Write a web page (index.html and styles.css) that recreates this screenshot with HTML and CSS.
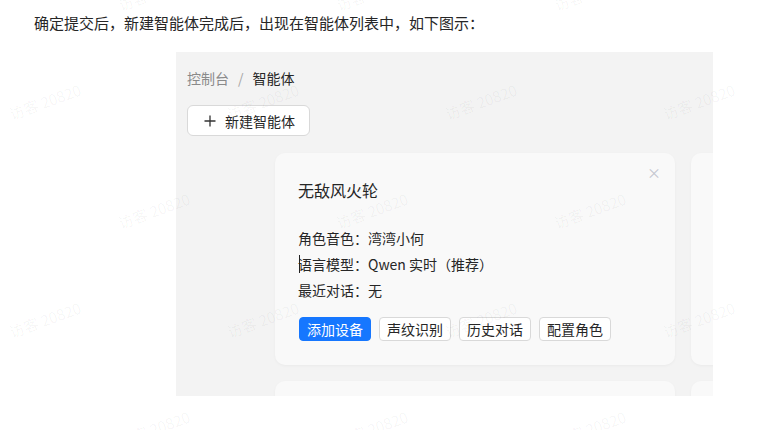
FILE: index.html
```html
<!DOCTYPE html>
<html lang="zh-CN">
<head>
<meta charset="utf-8">
<link rel="stylesheet" href="styles.css">
</head>
<body>
<p class="intro">确定提交后，新建智能体完成后，出现在智能体列表中，如下图示：</p>
<div class="shot">
  <div class="crumbs"><span class="crumb-muted">控制台</span><span class="crumb-sep">/</span><span class="crumb-cur">智能体</span></div>
  <button class="new-btn"><svg class="plus" width="12" height="12" viewBox="0 0 12 12"><path d="M6 0.5V11.5M0.5 6H11.5" stroke="#333" stroke-width="1.3" fill="none"/></svg><span>新建智能体</span></button>
  <div class="cards">
    <div class="card">
      <span class="close">×</span>
      <div class="card-title">无敌风火轮</div>
      <div class="info">
        <div class="line">角色音色：湾湾小何</div>
        <div class="line"><span class="caret"></span>语言模型：Qwen 实时（推荐）</div>
        <div class="line">最近对话：无</div>
      </div>
      <div class="actions">
        <button class="act primary">添加设备</button>
        <button class="act">声纹识别</button>
        <button class="act">历史对话</button>
        <button class="act">配置角色</button>
      </div>
    </div>
    <div class="card"></div>
    <div class="card"></div>
    <div class="card"></div>
  </div>
</div>
<div class="wm">
  <div class="wm-row odd"><span>访客 20820</span><span>访客 20820</span><span>访客 20820</span><span>访客 20820</span></div>
  <div class="wm-row even"><span>访客 20820</span><span>访客 20820</span><span>访客 20820</span><span>访客 20820</span></div>
  <div class="wm-row odd"><span>访客 20820</span><span>访客 20820</span><span>访客 20820</span><span>访客 20820</span></div>
  <div class="wm-row even"><span>访客 20820</span><span>访客 20820</span><span>访客 20820</span><span>访客 20820</span></div>
  <div class="wm-row odd"><span>访客 20820</span><span>访客 20820</span><span>访客 20820</span><span>访客 20820</span></div>
</div>
</body>
</html>
```
FILE: styles.css
```css
* { box-sizing: border-box; }
html, body { margin: 0; padding: 0; background: #fff; }
body {
  width: 771px; height: 430px; overflow: hidden; position: relative;
  font-family: "Noto Sans CJK SC", "Noto Sans", sans-serif;
  color: #262626;
}
.intro {
  margin: 0; padding: 12px 0 0 34px;
  font-size: 15px; line-height: 22px; height: 52px;
  color: #262626;
}
.shot {
  margin-left: 176px; width: 537px; height: 344px;
  background: #f3f3f3; overflow: hidden;
  padding: 16px 0 0 11px;
}
.crumbs { font-size: 14px; line-height: 20px; display: flex; align-items: center; }
.crumb-muted { color: #8a8a8a; }
.crumb-sep { color: #a6a6a6; margin: 0 9px; }
.crumb-cur { color: #262626; }
.new-btn {
  margin-top: 17px; height: 31px; width: 123px;
  background: #fff; border: 1px solid #d9d9d9; border-radius: 6px;
  display: flex; align-items: center; padding: 0 0 0 16px; gap: 9px;
  font-family: inherit; font-size: 14px; color: #262626;
}
.plus { display: block; }
.cards {
  margin: 17px 0 0 88px;
  display: grid; grid-template-columns: 400px 400px; gap: 16px;
}
.card {
  position: relative; background: #f9f9f9; border-radius: 10px;
  height: 212px; padding: 25px 24px 0 23px;
  box-shadow: 0 1px 3px rgba(0,0,0,0.04);
}
.close {
  position: absolute; top: 12px; right: 14px;
  font-size: 14px; line-height: 14px; color: #c3c6cf;
}
.card-title { font-size: 16px; line-height: 24px; color: #262626; }
.info { margin-top: 23px; }
.line { font-size: 14px; line-height: 26px; color: #262626; position: relative; }
.caret {
  position: absolute; left: 1px; top: 4px; width: 1px; height: 18px; background: #222;
}
.actions { margin-top: 14px; display: flex; gap: 8px; padding-left: 1px; }
.act {
  height: 24px; padding: 0 7px; font-family: inherit; font-size: 14px;
  line-height: 22px; border: 1px solid #d9d9d9; border-radius: 4px;
  background: #fff; color: #262626;
}
.act.primary { background: #1677ff; border-color: #1677ff; color: #fff; }
.wm {
  position: absolute; left: 0; top: -62px; width: 771px; height: 492px;
  overflow: hidden; pointer-events: none;
}
.wm-row { height: 109px; display: flex; align-items: center; }
.wm-row.even { margin-left: -64px; }
.wm-row.odd { margin-left: 45px; }
.wm-row span {
  flex: 0 0 218px; text-align: center;
  font-size: 15px; line-height: 20px; color: rgba(0,0,0,0.045);
  transform: rotate(-20deg); white-space: nowrap;
}
```
